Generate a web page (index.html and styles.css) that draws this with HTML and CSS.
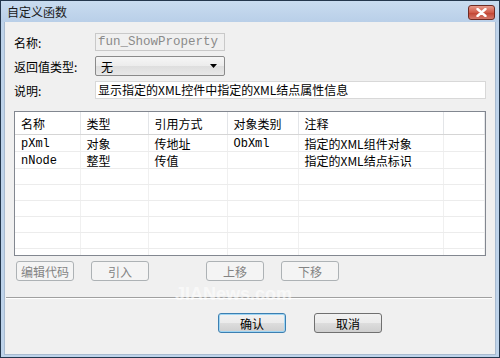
FILE: index.html
```html
<!DOCTYPE html>
<html lang="zh-CN">
<head>
    <meta charset="UTF-8">
    <title>自定义函数</title>
    <link rel="stylesheet" href="styles.css">
</head>
<body>
    <div class="window">
        <div class="titlebar">
            <span class="title">自定义函数</span>
            <span class="close">
                <svg width="11" height="9" viewBox="0 0 11 9"><path d="M1.5 1 L9.5 8 M9.5 1 L1.5 8" stroke="#fff" stroke-width="2.4" stroke-linecap="round"/></svg>
            </span>
        </div>

        <div class="client">
            <div class="form-row">
                <label>名称:</label>
                <div class="textbox disabled short">fun_ShowProperty</div>
            </div>
            <div class="form-row">
                <label>返回值类型:</label>
                <div class="combo short">
                    <span>无</span>
                    <svg width="7" height="4" viewBox="0 0 7 4"><path d="M0 0 H7 L3.5 4 Z" fill="#000"/></svg>
                </div>
            </div>
            <div class="form-row">
                <label>说明:</label>
                <div class="textbox wide">显示指定的XML控件中指定的XML结点属性信息</div>
            </div>

            <!-- Parameter list -->
            <div class="listview">
                <table>
                    <colgroup>
                        <col style="width:65px"><col style="width:68px"><col style="width:79px">
                        <col style="width:71px"><col style="width:145px"><col>
                    </colgroup>
                    <thead>
                        <tr><th>名称</th><th>类型</th><th>引用方式</th><th>对象类别</th><th>注释</th><th></th></tr>
                    </thead>
                    <tbody>
                        <tr><td class="mono">pXml</td><td>对象</td><td>传地址</td><td class="mono">ObXml</td><td>指定的XML组件对象</td><td></td></tr>
                        <tr><td class="mono">nNode</td><td>整型</td><td>传值</td><td></td><td>指定的XML结点标识</td><td></td></tr>
                        <tr><td></td><td></td><td></td><td></td><td></td><td></td></tr>
                        <tr><td></td><td></td><td></td><td></td><td></td><td></td></tr>
                        <tr><td></td><td></td><td></td><td></td><td></td><td></td></tr>
                        <tr><td></td><td></td><td></td><td></td><td></td><td></td></tr>
                        <tr><td></td><td></td><td></td><td></td><td></td><td></td></tr>
                        <tr><td></td><td></td><td></td><td></td><td></td><td></td></tr>
                    </tbody>
                </table>
            </div>

            <div class="list-buttons">
                <button class="btn" disabled>编辑代码</button>
                <button class="btn" disabled>引入</button>
                <button class="btn push" disabled>上移</button>
                <button class="btn" disabled>下移</button>
            </div>

            <div class="separator"></div>

            <div class="footer">
                <button class="btn default">确认</button>
                <button class="btn">取消</button>
            </div>

            <div class="watermark">JIANews.com</div>
        </div>
    </div>
</body>
</html>
```

FILE: styles.css
```css
* {
    box-sizing: border-box;
    margin: 0;
    padding: 0;
}

body {
    font-family: "Noto Sans CJK SC", sans-serif;
    font-size: 12px;
    color: #000;
    background: #fff;
}

.window {
    width: 500px;
    height: 358px;
    border: 1px solid #24374d;
    background: #bed3ea;
    padding: 0 3px 2px 3px;
    display: flex;
    flex-direction: column;
}

/* Title bar */
.titlebar {
    height: 21px;
    display: flex;
    align-items: center;
    justify-content: space-between;
    background: linear-gradient(#c9dcf0, #b9cfe8);
    margin: 0 -3px;
    padding: 0 4px 0 6px;
}

.title {
    font-size: 12px;
    color: #1a1a1a;
}

.close {
    width: 27px;
    height: 15px;
    margin-top: 1px;
    border: 1px solid #6e2b24;
    border-radius: 3px;
    background: linear-gradient(#e89a8c, #cf5a48 50%, #c0412f 51%, #d5786a);
    display: flex;
    align-items: center;
    justify-content: center;
}

/* Client area */
.client {
    flex: 1;
    background: #f0f0f0;
    border: 1px solid #a9bbd0;
    border-top: none;
    padding: 11px 9px 0 9px;
    position: relative;
    overflow: hidden;
}

.form-row {
    display: flex;
    align-items: center;
    height: 18px;
    margin-bottom: 6px;
}

.form-row label {
    width: 81px;
    flex-shrink: 0;
}

.textbox {
    height: 18px;
    line-height: 16px;
    padding: 0 2px;
    border: 1px solid #abadb3;
    background: #fff;
    white-space: nowrap;
    overflow: hidden;
}

.textbox.disabled {
    background: #f0f0f0;
    border-color: #c9c9c9;
    color: #8a8a8a;
    font-family: "Liberation Mono", monospace;
    font-size: 12.5px;
}

.short {
    width: 130px;
}

.wide {
    flex: 1;
    border-color: #d8d8d8;
}

.combo {
    height: 20px;
    border: 1px solid #8a8a8a;
    border-radius: 2px;
    background: linear-gradient(#f6f6f6, #ececec 50%, #dedede 51%, #e8e8e8);
    display: flex;
    align-items: center;
    justify-content: space-between;
    padding: 0 7px 0 5px;
}

/* List view */
.listview {
    margin-top: 12px;
    height: 145px;
    border: 1px solid #828790;
    background: #fff;
    overflow: hidden;
}

.listview table {
    width: 100%;
    border-collapse: collapse;
    table-layout: fixed;
}

.listview thead tr {
    height: 22px;
}

.listview tbody tr {
    height: 16px;
}

.listview th {
    font-weight: normal;
    text-align: left;
    line-height: 16px;
    padding: 2px 6px 0;
    border-right: 1px solid #e3e5e8;
    border-bottom: 1px solid #d5d5d5;
}

.listview td {
    line-height: 14px;
    padding: 2px 6px 0;
    white-space: nowrap;
    border-right: 1px solid #f0f0f0;
    border-bottom: 1px solid #ececec;
}

.mono {
    font-family: "Liberation Mono", monospace;
}

/* Buttons */
.btn {
    font-family: "Noto Sans CJK SC", sans-serif;
    font-size: 12px;
    width: 58px;
    height: 20px;
    border: 1px solid #707070;
    border-radius: 3px;
    background: linear-gradient(#f2f2f2, #ebebeb 50%, #dddddd 51%, #cfcfcf);
    color: #000;
}

.btn:disabled {
    border-color: #adb2b5;
    background: #f4f4f4;
    color: #838383;
}

.list-buttons {
    display: flex;
    gap: 17px;
    margin-top: 5px;
    padding-left: 2px;
}

.list-buttons .push {
    margin-left: 40px;
}

.separator {
    margin: 16px -6px 0 -8px;
    border-top: 1px solid #a0a0a0;
    border-bottom: 1px solid #fff;
}

.footer {
    display: flex;
    gap: 28px;
    margin-top: 14px;
    padding-left: 204px;
}

.footer .btn {
    width: 68px;
}

.btn.default {
    border-color: #3c7fb1;
    box-shadow: inset 0 0 0 1px #9fd5f3;
}

/* faint site watermark over the dialog */
.watermark {
    position: absolute;
    left: 170px;
    top: 265px;
    font-family: "Liberation Sans", sans-serif;
    font-weight: bold;
    font-size: 18px;
    line-height: 15px;
    color: rgba(255, 255, 255, 0.6);
    pointer-events: none;
}
```
